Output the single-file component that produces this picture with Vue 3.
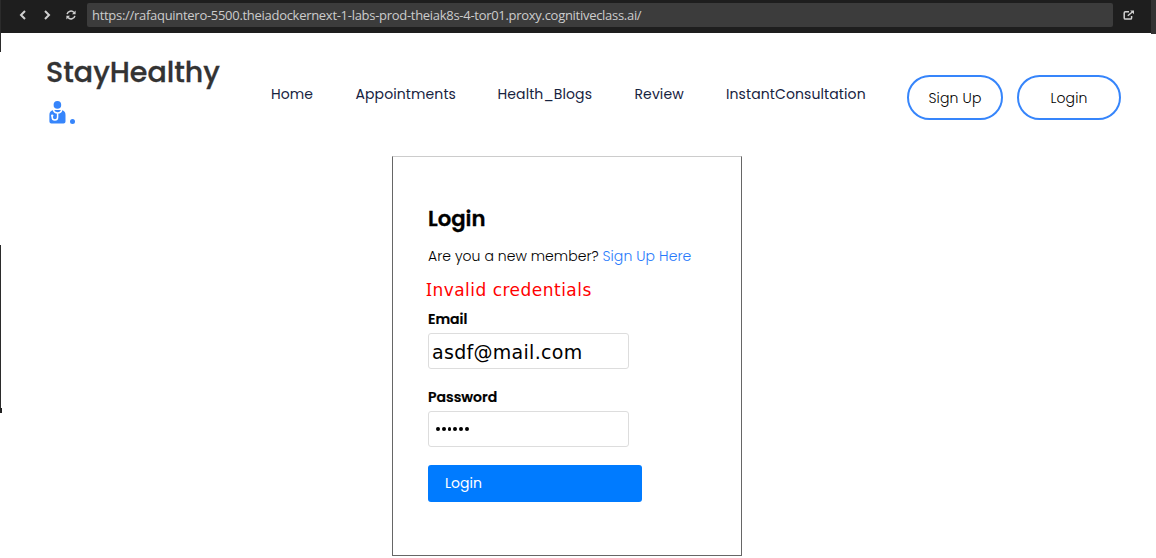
<script setup>
import { ref } from 'vue'

const url = 'https://rafaquintero-5500.theiadockernext-1-labs-prod-theiak8s-4-tor01.proxy.cognitiveclass.ai/'
const links = [
  { label: 'Home', name: 'home' },
  { label: 'Appointments', name: 'appointments' },
  { label: 'Health_Blogs', name: 'blogs' },
  { label: 'Review', name: 'review' },
  { label: 'InstantConsultation', name: 'consultation' },
]
const email = ref('asdf@mail.com')
const passwordLength = ref(6)
</script>

<template>
  <div class="page">
    <div class="browser">
      <svg class="arrow" viewBox="0 0 8 10"><path d="M6 1 2 5l4 4" /></svg>
      <svg class="arrow next" viewBox="0 0 8 10"><path d="m2 1 4 4-4 4" /></svg>
      <svg class="reload" viewBox="0 0 10 10">
        <path d="M1.1 4.2A4 4 0 0 1 8 2.4M8.9 5.8A4 4 0 0 1 2 7.6" />
        <path class="solid" d="M9.6.6v3.6H6zM.4 9.4V5.8H4z" />
      </svg>
      <div class="address"><span>{{ url }}</span></div>
      <svg class="external" viewBox="0 0 12 10">
        <path d="M6 1.7H2.4Q1.2 1.7 1.2 2.9v5q0 1.2 1.2 1.2h5q1.2 0 1.2-1.2V6M4.8 5.8 9.6 1.7" />
        <path class="solid" d="M7.2.4H11v3.8z" />
      </svg>
      <i class="corner"></i>
    </div>

    <header class="navbar">
      <div class="logo">
        <span class="brand">StayHealthy</span>
        <div class="mark">
          <svg class="doctor" viewBox="0 0 17 23">
            <circle cx="8.4" cy="3.9" r="3.8" />
            <path d="M4.2 9.1h8.6q3.7 1 3.7 4.8v6.5q0 2-2 2H2.4q-2 0-2-2v-6.5q0-3.8 3.8-4.8z" />
            <path class="tube" d="M4.4 8.8q.6 3.1 4.2 3.1t4-3.1M8.6 11.9v4.3q0 2.8-2.7 2.8t-2.7-2.8v-1.3" />
            <circle class="bell" cx="3.2" cy="14.6" r="1.2" />
          </svg>
          <i class="dot"></i>
        </div>
      </div>
      <nav>
        <a v-for="link in links" :key="link.name" :class="link.name">{{ link.label }}</a>
      </nav>
      <div class="actions">
        <button class="signup">Sign Up</button>
        <button class="enter">Login</button>
      </div>
    </header>

    <main class="card">
      <h2><span>Login</span></h2>
      <p class="member"><span class="question">Are you a new member?</span><a>Sign Up Here</a></p>
      <p class="error"><span class="initial">I</span>nvalid credentials</p>
      <label class="email-label">Email</label>
      <div class="field email">{{ email }}</div>
      <label class="password-label">Password</label>
      <div class="field password"><i v-for="n in passwordLength" :key="n"></i></div>
      <button class="submit">Login</button>
    </main>
    <i class="edge top"></i>
    <i class="edge side"></i>
    <i class="edge foot"></i>
  </div>
</template>

<style>
body { margin: 0; background: #fff; }
</style>

<style scoped>
* { box-sizing: border-box; }
.page { position: relative; width: 1156px; height: 558px; overflow: hidden; background: #fff; font-family: Poppins, Inter, "Open Sans", sans-serif; color: #111; }
.browser { display: flex; align-items: center; height: 33px; padding: 0 0 3px 19px; background: #1e1e1e; position: relative; }
.browser svg { fill: none; stroke: #d0d0d0; stroke-width: 2; flex: none; }
.browser .solid { fill: #d0d0d0; stroke: none; }
.arrow { width: 8px; height: 10px; }
.next { margin-left: 16px; }
.reload { width: 10px; height: 10px; margin-left: 15px; }
.browser .reload, .browser .external { stroke-width: 1.5; }
.address { width: 1026px; height: 24px; margin: 0 0 0 11px; padding-left: 5px; background: #3c3c3c; border-radius: 2px; color: #ccc; font: 13px/24px "Open Sans", "Noto Sans", sans-serif; white-space: nowrap; }
.address span { letter-spacing: -0.29px; }
.external { width: 12px; height: 10px; margin-left: 10px; }
.corner { position: absolute; right: 0; top: 0; width: 5px; height: 34px; background: #333; }

.navbar { display: flex; height: 123px; padding-left: 46px; }
.logo { width: 225px; padding-top: 18px; }
.brand { display: block; height: 42px; line-height: 43px; font-size: 28.5px; font-weight: 500; color: #333; white-space: nowrap; -webkit-text-stroke: .3px #333; }
.mark { display: flex; align-items: flex-end; height: 31px; padding-left: 3px; gap: 4px; }
.doctor { width: 17px; height: 23px; fill: #3685fb; }
.tube { fill: none; stroke: #fff; stroke-width: 1.5; }
.bell { fill: #fff; }
.dot { width: 5px; height: 5px; border-radius: 50%; background: #3685fb; }
nav { display: flex; width: 636px; gap: 42px; padding-top: 49px; font-size: 14px; line-height: 24px; color: #17233f; }
nav a { white-space: nowrap; letter-spacing: .1px; flex: none; }
.home { width: 42.5px; }
.appointments { width: 100px; }
.blogs { width: 95px; }
.review { width: 49.5px; }
.consultation { width: 140px; }
.actions { display: flex; gap: 14px; padding-top: 42px; }
.actions button { height: 45px; padding: 1px 0 0; border: 2px solid #3685fb; border-radius: 23px; background: #fff; color: #000; font: 300 14px Poppins, Inter, sans-serif; letter-spacing: .15px; }
.actions .signup { width: 96px; }
.actions .enter { width: 104px; }

.card { display: flex; flex-direction: column; align-items: flex-start; width: 350px; height: 400px; margin-left: 392px; padding: 44px 34px 0 35px; border: 1px solid #666; border-top-color: #ccc; }
.card p, h2 { margin: 0; white-space: nowrap; }
h2 { height: 36px; font-size: 21.2px; line-height: 36px; font-weight: 600; color: #000; -webkit-text-stroke: .3px #000; }
.member { display: flex; margin-top: 7px !important; height: 24px; line-height: 24px; font-size: 14px; color: #000; }
.question { width: 174.5px; font-weight: 300; letter-spacing: .04px; }
.member a { color: #2779fb; font-weight: 300; letter-spacing: .08px; }
.error { margin: 9px 0 0 -2px !important; height: 26px; line-height: 26px; font-family: "DejaVu Sans", sans-serif; font-size: 17px; letter-spacing: .48px; color: #f00; }
.initial { font-family: "Noto Sans", sans-serif; font-size: 17.5px; line-height: 1; }
label { height: 24px; line-height: 24px; font-size: 14px; font-weight: 600; color: #000; -webkit-text-stroke: .2px #000; }
.email-label { margin-top: 4px; }
.field { width: 201px; height: 36px; margin-top: 2px; border: 1px solid #ddd; border-radius: 3px; }
.email { padding-left: 3px; font: 19px/36px "DejaVu Sans", sans-serif; letter-spacing: .3px; color: #000; }
.password-label { margin-top: 16px; }
.password { display: flex; align-items: center; gap: 2px; padding-left: 7px; }
.password i { width: 3.8px; height: 3.8px; border-radius: 50%; background: #000; }
.submit { width: 214px; height: 37.5px; margin-top: 17.5px; padding: 0 0 0 17px; border: 0; border-radius: 3px; background: #007bff; color: #fff; font: 14px Poppins, Inter, sans-serif; text-align: left; }

.edge { position: absolute; left: 0; width: 1px; background: #2b2b2b; }
.top { top: 0; height: 52px; }
.side { top: 245px; height: 167px; }
.foot { top: 408px; width: 2px; height: 5px; background: #222; }
</style>
